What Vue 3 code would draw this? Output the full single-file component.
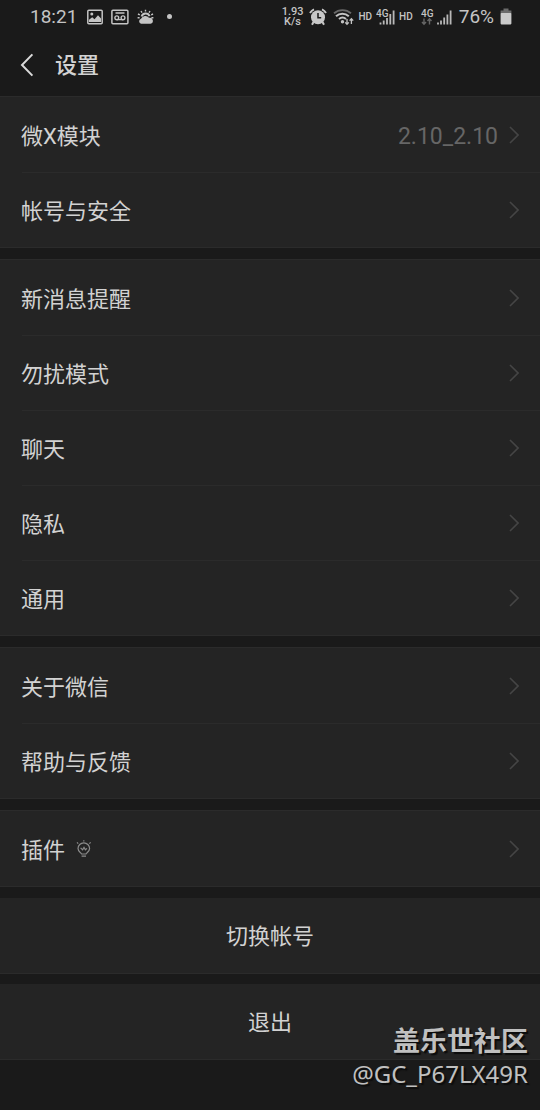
<script setup>
const groups = [
  [
    { label: '微X模块', value: '2.10_2.10' },
    { label: '帐号与安全' },
  ],
  [
    { label: '新消息提醒' },
    { label: '勿扰模式' },
    { label: '聊天' },
    { label: '隐私' },
    { label: '通用' },
  ],
  [
    { label: '关于微信' },
    { label: '帮助与反馈' },
  ],
  [
    { label: '插件', bulb: true },
  ],
]
const actions = ['切换帐号', '退出']
</script>

<template>
  <div class="screen">
    <div class="status">
      <div class="left">
        <span class="clock">18:21</span>
        <svg width="16" height="16" viewBox="0 0 16 16">
          <rect x="0.8" y="1.3" width="14.4" height="13.4" rx="1" fill="none" stroke="#c4c4c4" stroke-width="1.5" />
          <path d="M2 12.8 V10.8 L5.2 8.2 L7.5 10.2 L11 6.3 L14 9.5 V13 H2Z" fill="#c4c4c4" />
          <circle cx="4.8" cy="5" r="1.5" fill="#c4c4c4" />
        </svg>
        <svg width="18" height="16" viewBox="0 0 18 16">
          <rect x="0.9" y="1.3" width="16" height="13.4" rx="1" fill="none" stroke="#c4c4c4" stroke-width="1.5" />
          <path d="M4.5 4 H13.5 M6 10.6 H12" stroke="#c4c4c4" stroke-width="1.4" />
          <circle cx="5.8" cy="8.8" r="1.9" fill="none" stroke="#c4c4c4" stroke-width="1.4" />
          <circle cx="12" cy="8.8" r="1.9" fill="none" stroke="#c4c4c4" stroke-width="1.4" />
        </svg>
        <svg width="17" height="16" viewBox="0 0 17 16">
          <path d="M4.6 7.6 A4.2 4.2 0 0 1 12.6 7.2" fill="none" stroke="#c4c4c4" stroke-width="2" />
          <path d="M8.5 0.8 V2.6 M4 2 L5 3.6 M13 2 L12 3.6 M1 5 L2.8 5.9 M16 5 L14.2 5.9 M0.6 8.8 H2.6 M14.4 8.8 H16.4" stroke="#c4c4c4" stroke-width="1.4" />
          <path d="M4 14.8 A2.6 2.6 0 0 1 4 9.8 A4.6 4.6 0 0 1 12 8.8 A3 3 0 0 1 13.5 14.8Z" fill="#c4c4c4" />
        </svg>
        <span class="dot"></span>
      </div>
      <div class="right">
        <span class="speed"><span>1.93</span><span>K/s</span></span>
        <svg class="alarm" width="18" height="18" viewBox="0 0 18 18">
          <circle cx="9" cy="9.3" r="7" fill="#c8c8c8" />
          <path d="M1 5 A9 9 0 0 1 5 1.4 M13 1.4 A9 9 0 0 1 17 5 M4.5 14 L3 16.8 M13.5 14 L15 16.8" fill="none" stroke="#c8c8c8" stroke-width="2" />
          <path d="M9 5 V9.8 H12.2" fill="none" stroke="#1b1b1b" stroke-width="1.5" />
        </svg>
        <svg width="21" height="18" viewBox="0 0 21 18">
          <path d="M1 5.2 A13 13 0 0 1 18 5.2" fill="none" stroke="#696969" stroke-width="1.8" />
          <path d="M3 8.2 A9.3 9.3 0 0 1 15.8 8.2 M6 11 A5.4 5.4 0 0 1 13 11" fill="none" stroke="#c4c4c4" stroke-width="2" />
          <circle cx="9.5" cy="13.8" r="1.7" fill="#c4c4c4" />
          <path d="M14 11 V16 M12.2 14.4 L14 16.3 L15.8 14.4 M18.4 16 V11 M16.6 12.6 L18.4 10.7 L20.2 12.6" fill="none" stroke="#c4c4c4" stroke-width="1.3" />
        </svg>
        <span class="hd">HD</span>
        <svg width="19" height="18" viewBox="0 0 19 18">
          <path d="M4.5 16.5 V14.5 M7.7 16.5 V12.5 M11 16.5 V10 M14.3 16.5 V6 M17.6 16.5 V2.5" stroke="#b8b8b8" stroke-width="1.8" />
          <text x="0" y="9" class="net">4G</text>
        </svg>
        <span class="hd">HD</span>
        <svg class="second" width="32" height="18" viewBox="0 0 32 18">
          <text x="0" y="9" class="net">4G</text>
          <path d="M3 10.5 V16 M1 14 L3 16.3 L5 14 M8.5 16.5 V11 M6.5 13 L8.5 10.7 L10.5 13" fill="none" stroke="#666" stroke-width="1.4" />
          <path d="M17 16.5 V14.5 M20 16.5 V12.5 M23.2 16.5 V9.5 M26.4 16.5 V6.5 M29.6 16.5 V2.5" stroke="#b8b8b8" stroke-width="1.8" />
        </svg>
        <span class="percent">76%</span>
        <svg width="12" height="17" viewBox="0 0 12 17">
          <path d="M3.5 0.5 H8.5 V2.5 H11.4 V5.5 H0.6 V2.5 H3.5Z" fill="#6b6b6b" />
          <rect x="0.6" y="5" width="10.8" height="11.4" rx="0.8" fill="#cacaca" />
        </svg>
      </div>
    </div>

    <header class="bar">
      <button class="back" aria-label="返回">
        <svg width="14" height="24" viewBox="0 0 14 24">
          <path d="M12.4 1.4 L2 12 L12.4 22.6" fill="none" stroke="#dadada" stroke-width="2" />
        </svg>
      </button>
      <h1>设置</h1>
    </header>

    <main>
      <section v-for="(group, g) in groups" :key="g" class="group">
        <button v-for="item in group" :key="item.label" class="row">
          <span class="label">{{ item.label }}</span>
          <svg v-if="item.bulb" class="bulb" width="16" height="18" viewBox="0 0 16 18">
            <g fill="none" stroke="#8c8c8c" stroke-width="1.2">
              <path d="M5.6 14 C5.4 12.8 2 12 2 8.6 A5.8 5.8 0 0 1 13.6 8.6 C13.6 12 10.2 12.8 10 14Z" />
              <path d="M4.6 7.8 L6.6 9.8 L8 7.4 L9.4 9.8 L11 8.4" />
              <path d="M5.6 16.2 H10 M7.8 0.2 V1.4 M1 2.4 L2.2 3.6 M14.6 2.4 L13.4 3.6" />
            </g>
          </svg>
          <span class="value">{{ item.value }}</span>
          <svg width="10" height="18" viewBox="0 0 10 18">
            <path d="M1 1 L9 9 L1 17" fill="none" stroke="#454545" stroke-width="1.6" />
          </svg>
        </button>
      </section>
      <button v-for="action in actions" :key="action" class="action">{{ action }}</button>
    </main>

    <div class="mark">
      <strong>盖乐世社区</strong>
      <span>@GC_P67LX49R</span>
    </div>
  </div>
</template>

<style>
body {
  background: #1a1a1a;
}
</style>

<style scoped>
.screen {
  position: relative;
  min-height: 100vh;
  background: #1a1a1a;
  color: #d2d2d2;
  font-family: Roboto, "Noto Sans CJK SC", sans-serif;
}
button {
  margin: 0;
  padding: 0;
  border: 0;
  background: none;
  color: inherit;
  font: inherit;
}
svg {
  display: block;
  flex: none;
}
.status {
  display: flex;
  justify-content: space-between;
  height: 33px;
  padding: 0 28px 0 30px;
  color: #c4c4c4;
}
.left,
.right {
  display: flex;
  align-items: center;
}
.left {
  gap: 8px;
}
.clock {
  margin-right: 2px;
  font-size: 19px;
}
.dot {
  width: 5px;
  height: 5px;
  margin-left: 5px;
  border-radius: 50%;
  background: #c4c4c4;
}
.right {
  gap: 4px;
}
.speed {
  display: flex;
  flex-direction: column;
  margin-right: 2px;
  font-size: 11px;
  font-weight: 500;
  line-height: 10px;
  text-align: center;
}
.alarm {
  margin-right: 2px;
}
.hd {
  font-size: 10px;
  font-weight: 500;
}
.second {
  margin-left: 4px;
}
.net {
  fill: #c4c4c4;
  font-size: 10px;
  font-weight: 500;
}
.percent {
  margin: 0 2px;
  font-size: 19px;
}
.bar {
  display: flex;
  align-items: center;
  gap: 21px;
  height: 63px;
  padding-left: 20px;
}
h1 {
  margin: 0;
  padding-top: 2px;
  font-size: 22px;
  font-weight: 500;
  line-height: 32px;
}
main {
  display: flex;
  flex-direction: column;
  font-size: 22px;
}
.group {
  margin-bottom: 11px;
  border-top: 1px solid #2b2b2b;
  border-bottom: 1px solid #2b2b2b;
  background: #242424;
}
.row {
  position: relative;
  display: flex;
  align-items: center;
  width: 100%;
  height: 75px;
  padding: 0 21px;
  text-align: left;
}
.row + .row::before {
  content: "";
  position: absolute;
  top: 0;
  left: 22px;
  right: 0;
  height: 1px;
  background: #2b2b2b;
}
.label,
.value {
  padding-top: 4px;
  line-height: 32px;
}
.bulb {
  margin-left: 11px;
}
.value {
  margin-left: auto;
  margin-right: 11px;
  color: #666;
  font-size: 23px;
}
.action {
  height: 76px;
  margin-bottom: 10px;
  padding-bottom: 3px;
  border-bottom: 1px solid #2b2b2b;
  background: #242424;
}
.mark {
  position: absolute;
  right: 12px;
  top: 1023px;
  display: flex;
  flex-direction: column;
  align-items: flex-end;
  color: #c0c0c0;
  font-family: "Noto Sans", "Noto Sans CJK SC", sans-serif;
  font-size: 24px;
  line-height: 30px;
  text-shadow: 2px 2px 1px #0c0c0c;
}
.mark strong {
  font-size: 27px;
  line-height: 36px;
}
</style>
